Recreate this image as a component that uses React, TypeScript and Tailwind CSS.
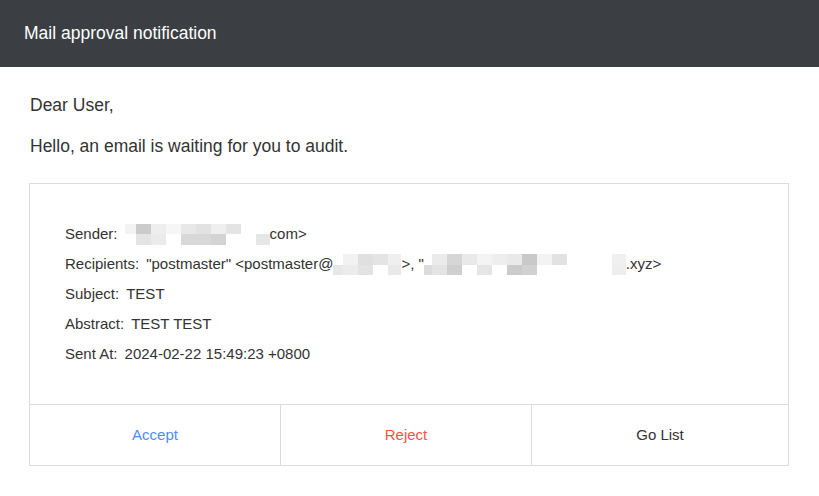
import React from 'react';

type Cell = [number, string]; // width, colour

const Mosaic = ({ rows }: { rows: { h: number; cells: Cell[] }[] }) => (
  <span className="inline-flex flex-col align-middle -translate-y-[1px]">
    {rows.map((row, i) => (
      <span key={i} className="flex">
        {row.cells.map(([w, c], j) => (
          <span key={j} className="block" style={{ width: w, height: row.h, background: c }} />
        ))}
      </span>
    ))}
  </span>
);

const senderMask = [
  {
    h: 10,
    cells: [
      [11, '#f3f3f3'],
      [15, '#cbcbcb'],
      [15, '#eeeeee'],
      [15, '#f6f6f6'],
      [15, '#e8e8e8'],
      [15, '#e2e2e2'],
      [15, '#efefef'],
      [15, '#e4e4e4'],
      [29, '#ffffff'],
    ] as Cell[],
  },
  {
    h: 11,
    cells: [
      [11, '#ffffff'],
      [15, '#e4e4e4'],
      [15, '#ebebeb'],
      [15, '#ffffff'],
      [30, '#d8d8d8'],
      [15, '#d3d3d3'],
      [30, '#ffffff'],
      [14, '#e6e6e6'],
    ] as Cell[],
  },
];

const hostMask = [
  {
    h: 11,
    cells: [
      [10, '#ffffff'],
      [15, '#f2f2f2'],
      [15, '#e0e0e0'],
      [15, '#e4e4e4'],
      [13, '#efefef'],
    ] as Cell[],
  },
  {
    h: 10,
    cells: [
      [10, '#e7e7e7'],
      [15, '#ececec'],
      [15, '#e3e3e3'],
      [15, '#ffffff'],
      [13, '#e9e9e9'],
    ] as Cell[],
  },
];

const nameMask = [
  {
    h: 11,
    cells: [
      [8, '#ffffff'],
      [15, '#ebebeb'],
      [15, '#d6d6d6'],
      [15, '#e9e9e9'],
      [15, '#f4f4f4'],
      [15, '#eeeeee'],
      [15, '#e9e9e9'],
      [15, '#c9c9c9'],
      [15, '#f3f3f3'],
      [15, '#e2e2e2'],
      [45, '#ffffff'],
      [14, '#f0f0f0'],
    ] as Cell[],
  },
  {
    h: 10,
    cells: [
      [8, '#dcdcdc'],
      [15, '#e4e4e4'],
      [15, '#cfcfcf'],
      [15, '#ffffff'],
      [15, '#e5e5e5'],
      [15, '#ffffff'],
      [15, '#cbcbcb'],
      [15, '#d1d1d1'],
      [15, '#ffffff'],
      [15, '#ffffff'],
      [45, '#ffffff'],
      [14, '#eeeeee'],
    ] as Cell[],
  },
];

const Row = ({ label, children }: { label: string; children: React.ReactNode }) => (
  <div className="h-[30px] leading-[30px] whitespace-nowrap">
    <span>{label}</span>
    <span className="ml-[7px]">{children}</span>
  </div>
);

export default function App() {
  return (
    <div className="min-h-[496px] bg-white text-[#333] font-['Liberation_Sans',Arial,sans-serif]">
      <div className="h-[67px] bg-[#3b3f43] px-6 flex items-center">
        <h1 className="text-white text-[17.5px]">Mail approval notification</h1>
      </div>

      <div className="px-[30px] pb-[30px]">
        <p className="mt-[26px] text-[17.5px] leading-6">Dear User,</p>
        <p className="mt-[17px] text-[17.5px] leading-6">Hello, an email is waiting for you to audit.</p>

        <div className="mt-[25px] -ml-px border border-[#dcdcdc] text-[15px]">
          <div className="px-[35px] pt-[35px] pb-[35px]">
            <Row label="Sender:">
              <Mosaic rows={senderMask} />
              com&gt;
            </Row>
            <Row label="Recipients:">
              "postmaster" &lt;postmaster@
              <Mosaic rows={hostMask} />
              &gt;, "
              <Mosaic rows={nameMask} />
              .xyz&gt;
            </Row>
            <Row label="Subject:">TEST</Row>
            <Row label="Abstract:">TEST TEST</Row>
            <Row label="Sent At:">2024-02-22 15:49:23 +0800</Row>
          </div>
          <div className="grid grid-cols-[250px_251px_1fr] border-t border-[#dcdcdc] h-[61px]">
            <button className="flex items-center justify-center text-[#4b8ef5]">Accept</button>
            <button className="flex items-center justify-center text-[#f2553f] border-l border-[#dcdcdc]">
              Reject
            </button>
            <button className="flex items-center justify-center text-[#333] border-l border-[#dcdcdc]">
              Go List
            </button>
          </div>
        </div>
      </div>
    </div>
  );
}
